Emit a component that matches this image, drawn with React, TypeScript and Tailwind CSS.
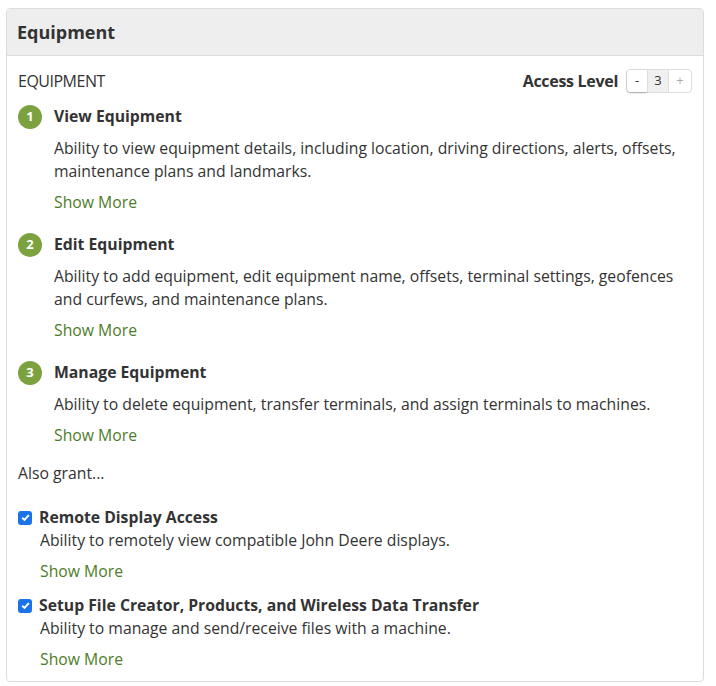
import React from 'react';

const levels = [
  {
    n: 1,
    title: 'View Equipment',
    desc: 'Ability to view equipment details, including location, driving directions, alerts, offsets, maintenance plans and landmarks.',
  },
  {
    n: 2,
    title: 'Edit Equipment',
    desc: 'Ability to add equipment, edit equipment name, offsets, terminal settings, geofences and curfews, and maintenance plans.',
  },
  {
    n: 3,
    title: 'Manage Equipment',
    desc: 'Ability to delete equipment, transfer terminals, and assign terminals to machines.',
  },
];

const grants = [
  { title: 'Remote Display Access', desc: 'Ability to remotely view compatible John Deere displays.' },
  { title: 'Setup File Creator, Products, and Wireless Data Transfer', desc: 'Ability to manage and send/receive files with a machine.' },
];

const Check = () => (
  <span className="w-[14px] h-[14px] rounded-[3px] bg-[#1a73e8] flex items-center justify-center shrink-0">
    <svg width="11" height="11" viewBox="0 0 10 10">
      <path d="M2 5.2 L4.1 7.2 L8 2.8" stroke="white" strokeWidth="1.8" fill="none" />
    </svg>
  </span>
);

export default function App() {
  return (
    <div className="bg-white min-h-[686px] pt-[8px] text-[#333] text-[15.75px]" style={{ fontFamily: '"Open Sans", sans-serif' }}>
      <div className="ml-[6px] w-[698px] border border-[#ddd] rounded-[4px] overflow-hidden">
        <div className="bg-[#eeeeee] h-[47px] flex items-center px-[10px] border-b border-[#ddd]">
          <h2 className="text-[18px] font-bold text-[#333]">Equipment</h2>
        </div>
        <div className="px-[11px] pt-[12px] pb-[10px]">
          <div className="flex items-center justify-between h-[26px]">
            <span className="text-[16px] tracking-[-0.5px]">EQUIPMENT</span>
            <div className="flex items-center gap-[8px]">
              <span className="font-bold text-[16px] tracking-[-0.3px]">Access Level</span>
              <div className="flex h-[24px] border border-[#ddd] rounded-[4px] text-[13px]">
                <button className="w-[20px] bg-white rounded-l-[4px] shadow-[0_1px_2px_rgba(0,0,0,0.25)] text-[#333]">-</button>
                <span className="w-[22px] bg-[#f0f0f0] border-x border-[#ddd] flex items-center justify-center text-[#333]">3</span>
                <button className="w-[22px] text-[#aaa]">+</button>
              </div>
            </div>
          </div>
          <div className="mt-[11px]">
            {levels.map((l) => (
              <div key={l.n} className="mb-[19px] last:mb-0">
                <div className="flex items-center h-[24px]">
                  <span className="w-[24px] h-[24px] rounded-full bg-[#7ba23f] text-white text-[13px] font-bold flex items-center justify-center">
                    {l.n}
                  </span>
                  <span className="ml-[12px] font-bold">{l.title}</span>
                </div>
                <div className="pl-[36px] mt-[8px]">
                  <p className="leading-[23px]">{l.desc}</p>
                  <a className="block mt-[8px] leading-[23px] text-[#4f7c2a]">Show More</a>
                </div>
              </div>
            ))}
          </div>
          <p className="leading-[23px] mt-[15px]">Also grant...</p>
          <div className="mt-[21px]">
            {grants.map((g) => (
              <div key={g.title} className="mb-[11px] last:mb-0">
                <label className="flex items-center gap-[7px] h-[23px]">
                  <Check />
                  <span className="font-bold">{g.title}</span>
                </label>
                <div className="pl-[22px]">
                  <p className="leading-[23px]">{g.desc}</p>
                  <a className="block mt-[8px] leading-[23px] text-[#4f7c2a]">Show More</a>
                </div>
              </div>
            ))}
          </div>
        </div>
      </div>
    </div>
  );
}
